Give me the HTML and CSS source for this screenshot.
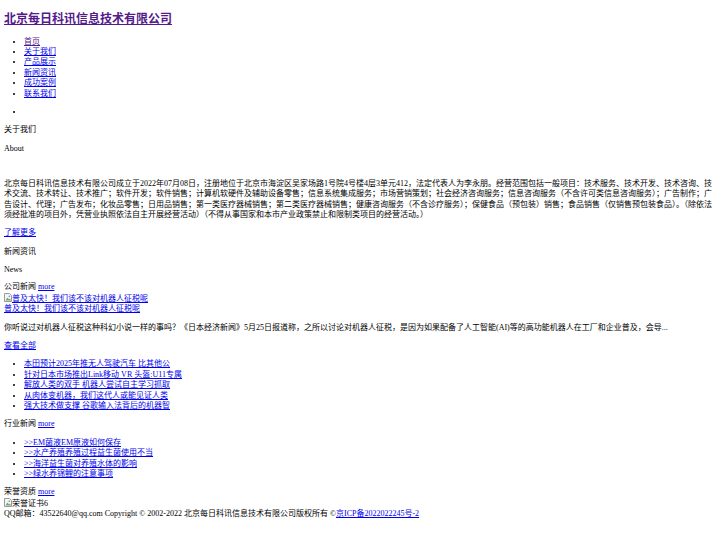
FILE: index.html
```html
<!DOCTYPE html>
<html lang="zh-CN">
<head>
  <meta charset="UTF-8">
  <title>北京每日科讯信息技术有限公司</title>
  <link rel="stylesheet" href="styles.css">
</head>
<body>
  <div class="header">
    <h1 class="logo"><a class="seen" href="#">北京每日科讯信息技术有限公司</a></h1>
    <ul class="nav">
      <li><a class="seen" href="#">首页</a></li>
      <li><a href="#">关于我们</a></li>
      <li><a href="#">产品展示</a></li>
      <li><a href="#">新闻资讯</a></li>
      <li><a href="#">成功案例</a></li>
      <li><a href="#">联系我们</a></li>
    </ul>
    <ul class="banner">
      <li></li>
    </ul>
  </div>

  <div class="about">
    <p>关于我们</p>
    <p class="en">About</p>
    <p class="about-text">北京每日科讯信息技术有限公司成立于2022年07月08日，注册地位于北京市海淀区吴家场路1号院4号楼4层3单元412，法定代表人为李永朋。经营范围包括一般项目：技术服务、技术开发、技术咨询、技术交流、技术转让、技术推广；软件开发；软件销售；计算机软硬件及辅助设备零售；信息系统集成服务；市场营销策划；社会经济咨询服务；信息咨询服务（不含许可类信息咨询服务）；广告制作；广告设计、代理；广告发布；化妆品零售；日用品销售；第一类医疗器械销售；第二类医疗器械销售；健康咨询服务（不含诊疗服务）；保健食品（预包装）销售；食品销售（仅销售预包装食品）。（除依法须经批准的项目外，凭营业执照依法自主开展经营活动）（不得从事国家和本市产业政策禁止和限制类项目的经营活动。）</p>
    <p><a href="#">了解更多</a></p>
  </div>

  <div class="news">
    <p>新闻资讯</p>
    <p class="en">News</p>

    <div class="box-title">公司新闻 <a href="#">more</a></div>
    <a class="pic" href="#"><svg class="broken" viewBox="0 0 8 9" width="8" height="9"><path d="M0.5 0.5h5l2 2v6h-7z" fill="#f4f4f4" stroke="#9a9a9a"/><path d="M1.5 7.5l2-3 1.5 2 1-1 1 2z" fill="#6fa86a"/><circle cx="5.3" cy="3.2" r="0.8" fill="#4d8fd6"/></svg>普及太快！我们该不该对机器人征税呢</a>
    <a class="pic" href="#">普及太快！我们该不该对机器人征税呢</a>
    <p>你听说过对机器人征税这种科幻小说一样的事吗？《日本经济新闻》5月25日报道称，之所以讨论对机器人征税，是因为如果配备了人工智能(AI)等的高功能机器人在工厂和企业普及，会导...</p>
    <p><a href="#">查看全部</a></p>
    <ul class="list">
      <li><a href="#">本田预计2025年推无人驾驶汽车 比其他公</a></li>
      <li><a href="#">针对日本市场推出Link移动 VR 头盔:U11专属</a></li>
      <li><a href="#">解放人类的双手 机器人尝试自主学习抓取</a></li>
      <li><a href="#">从肉体变机器，我们这代人或能见证人类</a></li>
      <li><a href="#">强大技术做支撑 谷歌输入法背后的机器智</a></li>
    </ul>

    <div class="box-title">行业新闻 <a href="#">more</a></div>
    <ul class="list">
      <li><a href="#">&gt;&gt;EM菌液EM原液如何保存</a></li>
      <li><a href="#">&gt;&gt;水产养殖养殖过程益生菌使用不当</a></li>
      <li><a href="#">&gt;&gt;海洋益生菌对养殖水体的影响</a></li>
      <li><a href="#">&gt;&gt;绿水养锦鲤的注意事项</a></li>
    </ul>
  </div>

  <div class="honor">
    <div class="box-title">荣誉资质 <a href="#">more</a></div>
    <div class="pic"><svg class="broken" viewBox="0 0 8 9" width="8" height="9"><path d="M0.5 0.5h5l2 2v6h-7z" fill="#f4f4f4" stroke="#9a9a9a"/><path d="M1.5 7.5l2-3 1.5 2 1-1 1 2z" fill="#6fa86a"/><circle cx="5.3" cy="3.2" r="0.8" fill="#4d8fd6"/></svg>荣誉证书6</div>
  </div>

  <div class="footer">
    QQ邮箱：43522640@qq.com Copyright © 2002-2022 北京每日科讯信息技术有限公司版权所有 ©<a href="#">京ICP备2022022245号-2</a>
  </div>
</body>
</html>
```

FILE: styles.css
```css
body {
  font-family: 'Liberation Serif', 'Noto Sans CJK SC', serif;
  font-size: 8px;
  line-height: 1.3;
  color: #000;
  background: #fff;
  margin: 4px;
}

a {
  color: #0000ee;
}

a.seen {
  color: #551a8b;
}

p {
  margin: 8px 0;
}

.en {
  line-height: 1.15;
  margin-top: 7px;
}

ul {
  margin: 8px 0;
  padding-left: 20px;
}

.logo {
  font-size: 12px;
  margin: 8px 0 9px;
}

.about-text {
  margin-top: 26px;
}

.pic {
  display: block;
}

.broken {
  vertical-align: -1px;
}
```
